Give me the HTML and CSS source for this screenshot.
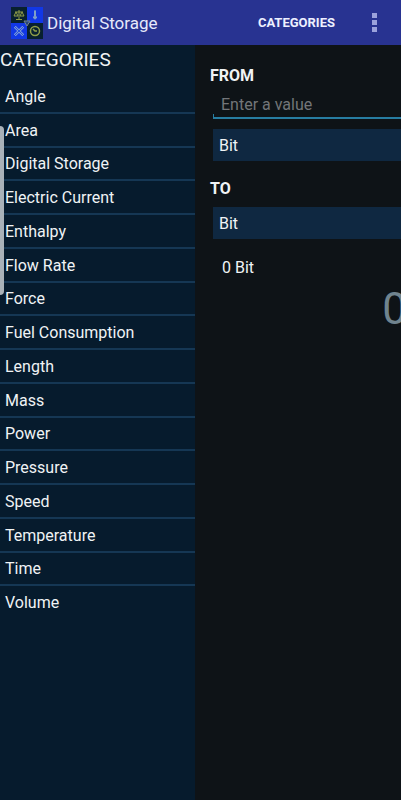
FILE: index.html
```html
<!DOCTYPE html>
<html lang="en">
<head>
<meta charset="utf-8">
<meta name="viewport" content="width=device-width, initial-scale=1">
<title>Digital Storage</title>
<link rel="stylesheet" href="styles.css">
</head>
<body>
<header class="bar">
  <svg class="logo" viewBox="0 0 32 32" aria-hidden="true">
    <rect width="16" height="16" fill="#08202f"/>
    <rect x="16" width="16" height="16" fill="#1238e6"/>
    <rect y="16" width="16" height="16" fill="#1238e6"/>
    <rect x="16" y="16" width="16" height="16" fill="#08202f"/>
    <g fill="none" stroke="#8f9d48" stroke-width="1">
      <path d="M8 3v9M5 12.500h6M4 5h8M5 5l-2 4h4zM11 5l-2 4h4z"/>
      <circle cx="24" cy="24" r="4.500" stroke-width="1.500"/>
      <path d="M22 22l2.500 2.500M24 24h2" stroke-width="1.500"/>
    </g>
    <path d="M23.500 4a.5.5 0 0 1 1 0v5a1.500 1.500 0 1 1-1 0z" fill="#7fa0c8" stroke="#7fa0c8"/>
    <g fill="none" stroke="#7896d8">
      <path d="M4 20l8 8M12 20l-8 8" stroke-width="2.500"/>
      <path d="M4 20l8 8M12 20l-8 8" stroke="#2450dc" stroke-width="1"/>
      <path d="M3 21l2-2M11 29l2-2M11 19l2 2M3 27l2 2"/>
    </g>
    <path d="M13 14h6l-3 5z" fill="#26457c" stroke="#71828b"/>
  </svg>
  <h1 class="title">Digital Storage</h1>
  <button class="action" type="button">CATEGORIES</button>
  <button class="more" type="button" aria-label="More options"><span class="dot"></span><span class="dot"></span><span class="dot"></span></button>
</header>
<div class="body">
  <nav class="drawer" aria-labelledby="drawer-title">
    <h2 class="drawer-title" id="drawer-title">CATEGORIES</h2>
    <ul class="list">
      <li><a href="#angle">Angle</a></li>
      <li><a href="#area">Area</a></li>
      <li><a href="#digital-storage">Digital Storage</a></li>
      <li><a href="#electric-current">Electric Current</a></li>
      <li><a href="#enthalpy">Enthalpy</a></li>
      <li><a href="#flow-rate">Flow Rate</a></li>
      <li><a href="#force">Force</a></li>
      <li><a href="#fuel-consumption">Fuel Consumption</a></li>
      <li><a href="#length">Length</a></li>
      <li><a href="#mass">Mass</a></li>
      <li><a href="#power">Power</a></li>
      <li><a href="#pressure">Pressure</a></li>
      <li><a href="#speed">Speed</a></li>
      <li><a href="#temperature">Temperature</a></li>
      <li><a href="#time">Time</a></li>
      <li><a href="#volume">Volume</a></li>
    </ul>
    <span class="handle"></span>
  </nav>
  <main class="converter">
    <label class="label" for="value">FROM</label>
    <div class="field"><input class="value" id="value" type="text" inputmode="decimal" placeholder="Enter a value"></div>
    <select class="unit" aria-label="From unit"><option>Bit</option></select>
    <label class="label label-to" for="to">TO</label>
    <select class="unit" id="to"><option>Bit</option></select>
    <p class="result">0 Bit</p>
    <output class="total" for="value to">0</output>
  </main>
</div>
</body>
</html>
```
FILE: styles.css
```css
* {
  box-sizing: border-box;
}

body {
  margin: 0;
  min-height: 100vh;
  display: flex;
  flex-direction: column;
  overflow: hidden;
  background: #0e1317;
  color: #f0f3f5;
  font: 16px/20px Roboto, sans-serif;
}

button,
input,
select {
  margin: 0;
  padding: 0;
  border: 0;
  border-radius: 0;
  background: none;
  color: inherit;
  font: inherit;
}

.bar {
  display: flex;
  align-items: center;
  height: 45px;
  padding: 0 20px 0 11px;
  background: #283391;
}

.logo {
  width: 32px;
  height: 32px;
}

.title {
  flex: 1;
  margin: 0 0 0 4px;
  font-size: 17px;
  font-weight: 400;
  color: #e6e9fb;
}

.action {
  font-size: 13px;
  font-weight: 700;
  color: #edf0ff;
}

.more {
  display: flex;
  flex-direction: column;
  align-items: center;
  gap: 2px;
  width: 14px;
  margin-left: 32px;
}

.dot {
  width: 5px;
  height: 5px;
  background: #9ba2dc;
}

.body {
  flex: 1;
  display: flex;
}

.drawer {
  position: relative;
  flex: none;
  width: 195px;
  background: #061b2d;
}

.drawer-title {
  margin: 0;
  padding: 2px 0 8px;
  font-size: 19px;
  line-height: 25px;
  font-weight: 400;
}

.list {
  display: grid;
  grid-auto-rows: 1fr;
  min-height: 540px;
  margin: 0;
  padding: 0;
  list-style: none;
}

.list li {
  display: flex;
  border-bottom: 2px solid #153754;
}

.list li:last-child {
  border-color: transparent;
}

.list a {
  flex: 1;
  display: flex;
  align-items: center;
  padding: 2px 0 0 5px;
  color: inherit;
  text-decoration: none;
}

.handle {
  position: absolute;
  top: 81px;
  left: 0;
  width: 4px;
  height: 169px;
  border-radius: 0 4px 4px 0;
  background: #a9b1b8;
}

.converter {
  flex: 1;
  min-width: 0;
  display: flex;
  flex-direction: column;
  padding: 21px 0 0 15px;
}

.label {
  font-weight: 700;
}

.label-to {
  margin-top: 18px;
}

.field {
  height: 33px;
  margin-left: 3px;
  padding-left: 8px;
  background: linear-gradient(#277da2, #277da2) left bottom / 1px 3px no-repeat;
  border-bottom: 2px solid #277da2;
}

.value {
  width: 100%;
  height: 100%;
  padding-top: 6px;
  outline: 0;
}

.value::placeholder {
  color: #737679;
  opacity: 1;
}

.unit {
  appearance: none;
  height: 32px;
  margin: 10px 0 0 3px;
  padding: 2px 0 0 6px;
  background: #0f2841;
}

.label-to + .unit {
  margin-top: 8px;
}

.result {
  margin: 19px 0 0 12px;
}

/* The large readout bleeds past the right edge of the panel. */
.total {
  align-self: flex-end;
  margin: 6px -6px 0 0;
  font-size: 44px;
  line-height: 50px;
  color: #70848f;
}
```
